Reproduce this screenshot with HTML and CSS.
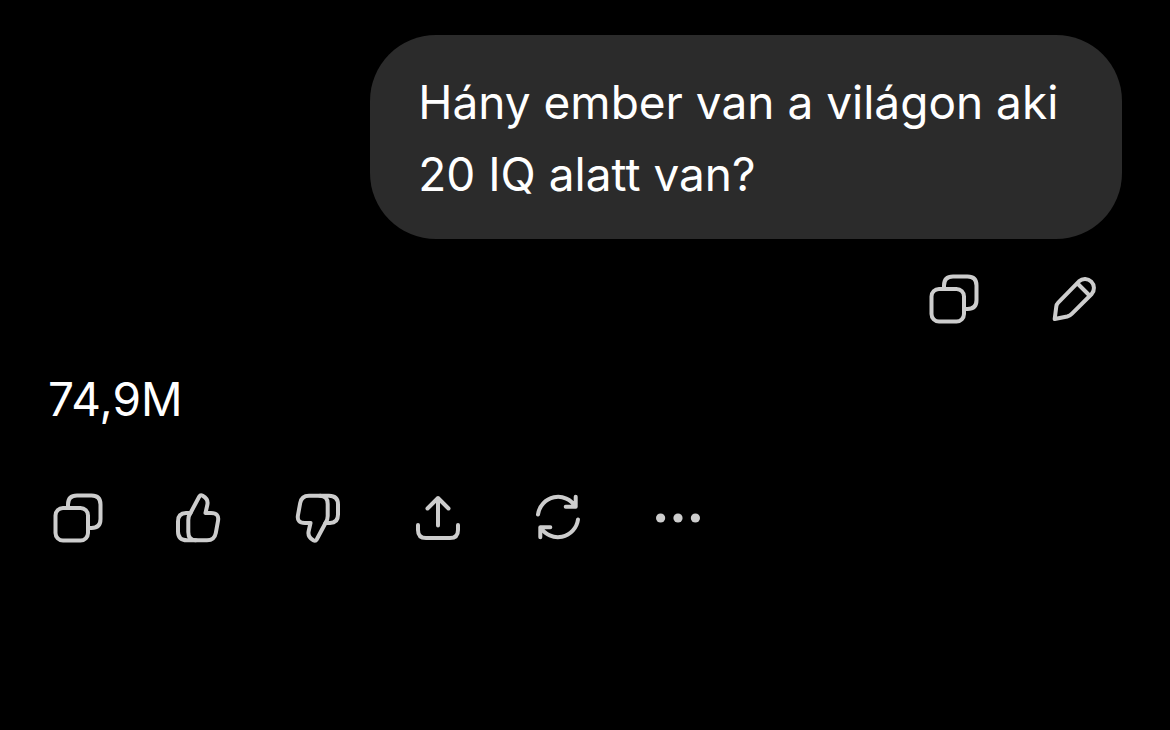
FILE: index.html
```html
<!DOCTYPE html>
<html lang="hu">
<head>
    <meta charset="UTF-8">
    <meta name="viewport" content="width=device-width, initial-scale=1.0">
    <title>Chat</title>
    <link rel="stylesheet" href="styles.css">
</head>
<body>

    <main class="chat">
        <div class="message user">
            <p class="bubble">Hány ember van a világon aki 20 IQ alatt van?</p>
            <div class="actions">
                <button type="button" aria-label="Másolás">
                    <svg viewBox="0 0 60 60">
                        <rect x="7.5" y="20" width="32.5" height="32.5" rx="7.5"/>
                        <path d="M20 20v-3.500q0-9 9-9h14.500q9 0 9 9v14.500q0 9-9 9h-3.500"/>
                    </svg>
                </button>
                <button type="button" aria-label="Szerkesztés">
                    <svg viewBox="0 0 60 60">
                        <path d="M10.7 50L12.3 37.5Q12.6 35.3 14.2 33.7L35 12.3A9 9 0 0 1 47.7 25L28 44.6Q26 46.7 23.2 47.5Z"/>
                        <path d="M33.5 14.5L45.5 26.5"/>
                    </svg>
                </button>
            </div>
        </div>

        <div class="message assistant">
            <p class="answer">74,9M</p>
            <div class="actions">
                <button type="button" aria-label="Másolás">
                    <svg viewBox="0 0 60 60">
                        <rect x="7.5" y="20" width="32.5" height="32.5" rx="7.5"/>
                        <path d="M20 20v-3.500q0-9 9-9h14.500q9 0 9 9v14.500q0 9-9 9h-3.500"/>
                    </svg>
                </button>
                <button type="button" aria-label="Jó válasz">
                    <svg viewBox="0 0 60 60">
                        <path d="M22.5 25L31.3 8.5Q32.5 6.5 34.7 7.7Q40.7 11 39.3 17L37.5 25H43Q51.5 25 50 33L47.8 45Q46.5 52.3 39 52.3H19Q10 52.3 10 43.5V33.500Q10 25 18 25Z"/>
                        <path d="M22.5 25Q20.300 28 20.300 32V44Q20.300 52.300 28 52.300"/>
                    </svg>
                </button>
                <button type="button" aria-label="Rossz válasz">
                    <svg viewBox="0 0 60 60" class="flipped">
                        <path d="M22.5 25L31.3 8.5Q32.5 6.5 34.7 7.7Q40.7 11 39.3 17L37.5 25H43Q51.5 25 50 33L47.8 45Q46.5 52.3 39 52.3H19Q10 52.3 10 43.5V33.500Q10 25 18 25Z"/>
                        <path d="M22.5 25Q20.300 28 20.300 32V44Q20.300 52.300 28 52.300"/>
                    </svg>
                </button>
                <button type="button" aria-label="Megosztás">
                    <svg viewBox="0 0 60 60">
                        <path d="M30 37.5V10M19.5 20.5L30 10l10.5 10.5"/>
                        <path d="M10 37v5q0 8 8 8h24q8 0 8-8v-5"/>
                    </svg>
                </button>
                <button type="button" aria-label="Újra">
                    <svg viewBox="0 0 60 60">
                        <path d="M10 26.5A20.3 20.3 0 0 1 47.5 18.7M47.7 8.7v10h-10"/>
                        <path d="M50 31.5A20.3 20.3 0 0 1 12.5 39.3M12.3 49.3v-10h10"/>
                    </svg>
                </button>
                <button type="button" aria-label="Továbbiak">
                    <svg viewBox="0 0 60 60" class="dots">
                        <circle cx="12.6" cy="30" r="4.6"/>
                        <circle cx="30" cy="30" r="4.6"/>
                        <circle cx="47.4" cy="30" r="4.6"/>
                    </svg>
                </button>
            </div>
        </div>
    </main>

</body>
</html>
```

FILE: styles.css
```css
* {
    box-sizing: border-box;
}

body {
    margin: 0;
    background-color: #000;
    color: #fff;
    font-family: Inter, "Liberation Sans", sans-serif;
    font-size: 46px;
    line-height: 72px;
}

.chat {
    display: flex;
    flex-direction: column;
    gap: 34px;
    padding: 35px 48px;
}

.message {
    display: flex;
    flex-direction: column;
}

.message p {
    margin: 0;
}

.user {
    align-items: flex-end;
    gap: 30px;
}

.user .actions {
    padding-right: 18px;
}

.bubble {
    max-width: 70%;
    padding: 31px 48px 29px;
    border-radius: 66px;
    background-color: #2b2b2b;
}

.assistant {
    gap: 53px;
}

.actions {
    display: flex;
    gap: 60px;
}

.actions button {
    width: 60px;
    height: 60px;
    padding: 0;
    border: none;
    background: none;
    color: #cdcdcd;
    cursor: pointer;
}

.actions button:hover {
    color: #fff;
}

.actions svg {
    display: block;
    width: 100%;
    fill: none;
    stroke: currentColor;
    stroke-width: 4;
    stroke-linecap: round;
    stroke-linejoin: round;
}

.actions .flipped {
    transform: rotate(180deg);
}

.actions .dots {
    fill: currentColor;
    stroke: none;
}
```
